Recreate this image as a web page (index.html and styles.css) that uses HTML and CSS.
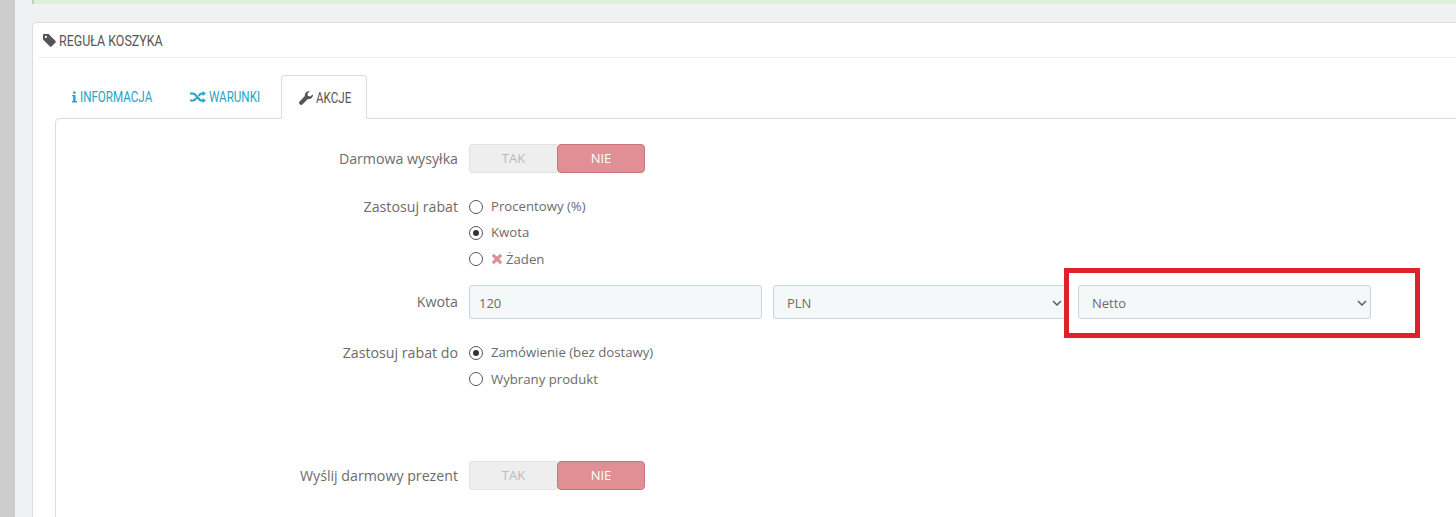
FILE: index.html
```html
<!DOCTYPE html>
<html lang="pl">
<head>
<meta charset="utf-8">
<title>Reguła koszyka</title>
<link rel="stylesheet" href="styles.css">
</head>
<body>
<div class="page">
  <aside class="strip"></aside>
  <main class="main">
    <div class="alert"></div>
    <section class="card">
      <h2 class="card-title">
        <svg class="ico ico-tag" viewBox="0 0 14 14"><path fill="#555" d="M0 1.2C0 .5.5 0 1.2 0H6l7.5 7.5c.5.5.5 1.2 0 1.7l-4.3 4.3c-.5.5-1.2.5-1.7 0L0 6Zm3.2.8a1.2 1.2 0 1 0 0 2.4 1.2 1.2 0 0 0 0-2.4Z" fill-rule="evenodd"/></svg>
        <span class="narrow">REGUŁA KOSZYKA</span>
      </h2>
      <nav class="tabs">
        <a class="tab tab-info">
          <svg class="ico ico-i" viewBox="0 0 6 13"><path fill="#25a5c9" d="M1.3 0h3v2.6h-3ZM0 4h4.3v7.4H6V13H0v-1.6h1.4V5.6H0Z"/></svg>
          <span class="narrow">INFORMACJA</span>
        </a>
        <a class="tab tab-cond">
          <svg class="ico ico-shuffle" viewBox="0 0 16 12"><path fill="none" stroke="#25a5c9" stroke-width="2.2" d="M0 2.5h3c3.5 0 5 7 8.500 7H13M0 9.500h3c1.500 0 2.500-1.200 3.300-2.500M8.800 5c.7-1.300 1.500-2.500 2.700-2.500H13"/><path fill="#25a5c9" d="M12.500 0 16 2.500 12.500 5ZM12.500 7 16 9.500 12.500 12Z"/></svg>
          <span class="narrow">WARUNKI</span>
        </a>
        <a class="tab tab-active">
          <svg class="ico ico-wrench" viewBox="0 0 14 14"><path fill="#555" d="M13.700 3.200c.4 1.400 0 2.900-1.100 3.900-1 1-2.400 1.300-3.700 1L3.300 13.600c-.6.600-1.500.6-2.100 0l-.8-.8c-.6-.6-.6-1.500 0-2.100L5.900 5.100c-.3-1.300 0-2.700 1-3.700C8 .3 9.400-.1 10.800.3L8.400 2.700l.6 2.300 2.300.6Z"/></svg>
          <span class="narrow">AKCJE</span>
        </a>
      </nav>
      <div class="panel">
        <div class="row row-free">
          <div class="label">Darmowa wysyłka</div>
          <div class="toggle"><span class="t-yes">TAK</span><span class="t-no">NIE</span></div>
        </div>
        <div class="row row-discount">
          <div class="label label-radio">Zastosuj rabat</div>
          <div class="radios">
            <div class="radio"><i class="dot"></i><span class="rt">Procentowy (%)</span></div>
            <div class="radio"><i class="dot on"></i><span class="rt">Kwota</span></div>
            <div class="radio"><i class="dot"></i><svg class="ico ico-x" viewBox="0 0 10 10"><path fill="#e08f95" stroke="#e08f95" stroke-width=".6" d="M2.300.4 5 3.100 7.700.4c.3-.3.700-.3 1 0l.9.900c.3.300.3.700 0 1L6.900 5l2.700 2.700c.3.300.3.700 0 1l-.9.900c-.3.300-.7.300-1 0L5 6.900 2.300 9.600c-.3.300-.7.300-1 0l-.9-.9c-.3-.3-.3-.7 0-1L3.100 5 .4 2.300c-.3-.3-.3-.7 0-1l.9-.9c.3-.3.7-.3 1 0Z"/></svg><span>Żaden</span></div>
          </div>
        </div>
        <div class="row row-amount">
          <div class="label">Kwota</div>
          <div class="field f-input">120</div>
          <div class="field f-select">PLN<svg class="chev" viewBox="0 0 10 6"><path fill="none" stroke="#555" stroke-width="1.400" d="m1 1 4 4 4-4"/></svg></div>
          <div class="field f-select f-tax">Netto<svg class="chev" viewBox="0 0 10 6"><path fill="none" stroke="#555" stroke-width="1.400" d="m1 1 4 4 4-4"/></svg></div>
        </div>
        <div class="row row-apply">
          <div class="label label-radio">Zastosuj rabat do</div>
          <div class="radios">
            <div class="radio"><i class="dot on"></i><span class="rt">Zamówienie (bez dostawy)</span></div>
            <div class="radio"><i class="dot"></i><span>Wybrany produkt</span></div>
          </div>
        </div>
        <div class="row row-gift">
          <div class="label">Wyślij darmowy prezent</div>
          <div class="toggle"><span class="t-yes">TAK</span><span class="t-no">NIE</span></div>
        </div>
      </div>
    </section>
  </main>
</div>
<div class="highlight"></div>
</body>
</html>
```
FILE: styles.css
```css
* { box-sizing: border-box; }
html, body { margin: 0; height: 517px; overflow: hidden; }
body { font-family: "Open Sans", "Noto Sans", sans-serif; font-size: 13px; color: #666; background: #fff; }
.page { display: flex; height: 517px; background: #eff1f2; }
.strip { width: 15px; flex: none; background: #ccc; }
.main { flex: 1; padding-left: 17px; min-width: 0; }
.alert { height: 4px; background: #dff0d8; border-left: 2px solid #b9d6ae; }
.card { margin-top: 18px; height: 520px; background: #fff; border: 1px solid #d9dde0; border-right: 0; border-bottom: 0; border-radius: 5px 0 0 0; padding: 0 0 0 5px; }
.card-title { margin: 0; height: 35px; display: flex; align-items: center; gap: 3px; border-bottom: 1px solid #eee; font-family: "Roboto", sans-serif; font-weight: 400; font-size: 15px; color: #555; padding: 1px 0 0 5px; }
.narrow { display: inline-block; transform: scaleX(.83); transform-origin: left center; white-space: nowrap; }
.ico { display: inline-block; flex: none; }
.ico-tag { width: 13px; height: 13px; }
.tabs { display: flex; height: 61px; padding: 17px 0 0 17px; font-family: "Roboto", sans-serif; font-size: 14px; }
.tab { display: flex; align-items: center; gap: 3px; height: 44px; color: #25a5c9; padding: 0 17px; white-space: nowrap; }
.tab-info { width: 117px; }
.tab-cond { width: 109px; padding-left: 18px; }
.tab-active { width: 86px; padding: 0 0 0 17px; color: #555; background: #fff; border: 1px solid #d9dde0; border-bottom: 0; border-radius: 4px 4px 0 0; position: relative; z-index: 1; }
.ico-i { width: 5px; height: 12px; }
.ico-shuffle { width: 16px; height: 12px; }
.ico-wrench { width: 14px; height: 14px; }
.panel { margin-left: 17px; height: 420px; border: 1px solid #d9dde0; border-right: 0; border-bottom: 0; border-radius: 5px 0 0 0; margin-top: -1px; padding-top: 25px; }
.row { display: flex; align-items: flex-start; }
.label { width: 402px; flex: none; text-align: right; line-height: 29px; margin-right: 11px; font-size: 14.200px; color: #6c6c6c; }
.label-radio { line-height: 26px; }
.toggle { display: flex; width: 176px; height: 29px; line-height: 27px; text-align: center; font-size: 13px; }
.t-yes { width: 88px; background: #eee; border: 1px solid #e2e2e2; border-right: 0; border-radius: 4px 0 0 4px; color: #bbb; }
.t-no { width: 88px; background: #e08f95; border: 1px solid #c9757c; border-radius: 4px; color: #fff; }
.row-discount { margin-top: 21px; }
.radios { display: flex; flex-direction: column; }
.radio { display: flex; align-items: center; height: 26px; font-size: 13.200px; color: #6c6c6c; }
.rt { margin-top: -2px; }
.dot { width: 14px; height: 14px; flex: none; margin-right: 8px; border: 1.500px solid #555; border-radius: 50%; background: #fff; position: relative; }
.dot.on::after { content: ""; position: absolute; left: 2.500px; top: 2.500px; width: 6px; height: 6px; border-radius: 50%; background: #333; }
.ico-x { width: 10px; height: 10px; margin: 0 4px 0 1px; }
.row-amount { margin-top: 13px; }
.row-amount .label { line-height: 34px; }
.field { height: 34px; background: #f5f8f9; border: 1px solid #c7d6db; border-radius: 3px; line-height: 34px; padding-left: 9px; font-size: 13px; color: #6c6c6c; position: relative; }
.f-input { width: 293px; margin-right: 11px; }
.f-select { width: 293px; padding-left: 13px; }
.f-tax { margin-left: 12px; }
.chev { position: absolute; right: 3px; top: 14px; width: 10px; height: 6px; }
.row-apply { margin-top: 21px; }
.row-gift { margin-top: 69px; }
.highlight { position: absolute; left: 1064px; top: 268px; width: 356px; height: 70px; border: 5px solid #e0202c; }
```
